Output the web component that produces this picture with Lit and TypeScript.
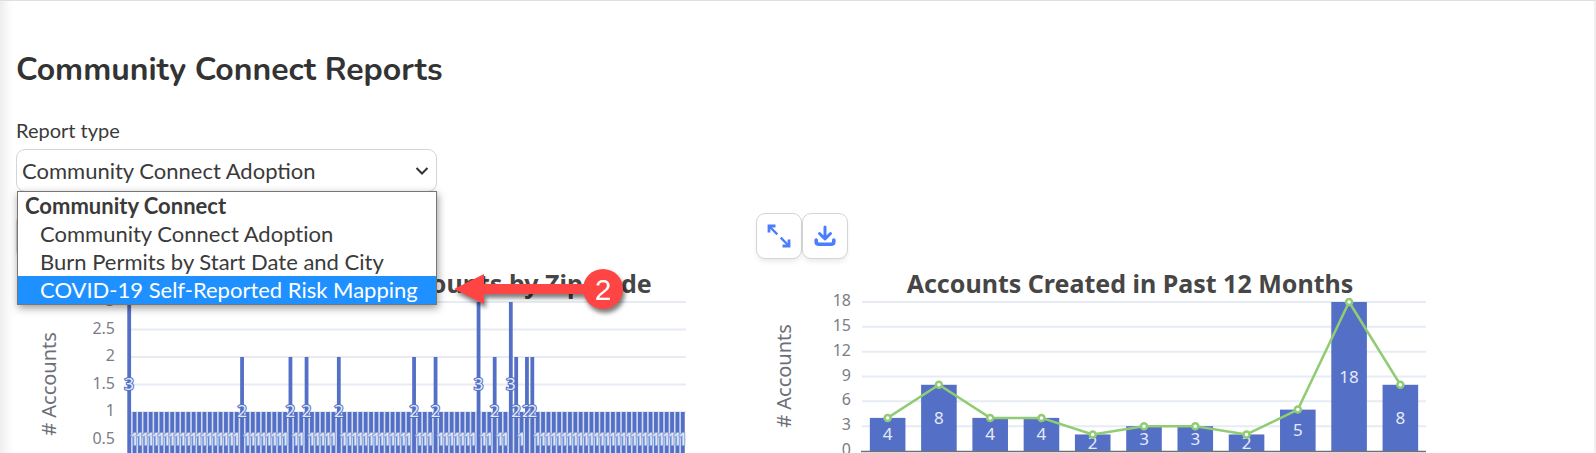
import { LitElement, html, svg, css } from "lit";
import { customElement, property } from "lit/decorators.js";

const fontStack = css`"Noto Sans", "Open Sans", sans-serif`;

@customElement("zip-chart")
class ZipChart extends LitElement {
  static styles = css`
    :host { display: block; }
    svg { display: block; width: 100%; font-family: ${fontStack}; }
    .title { font-size: 25px; font-weight: 700; fill: #464646; text-anchor: middle; }
    .tick { font-size: 16px; fill: #7b7d86; text-anchor: end; }
    .name { font-size: 20px; fill: #6e7079; text-anchor: middle; }
    .grid { stroke: #e6ebf4; stroke-width: 2; }
    .track { fill: #d3dbf3; }
    .bar { fill: #5470c6; }
    .value { font-size: 17px; fill: #e6eaf6; stroke: #5470c6; stroke-width: 2; paint-order: stroke; text-anchor: middle; }
    .one { stroke: #8fa2da; }
  `;

  private peaks: Record<number, number> = {
    0: 3, 21: 2, 30: 2, 33: 2, 39: 2, 53: 2, 57: 2, 65: 3, 68: 2, 71: 3, 72: 2, 74: 2, 75: 2,
  };

  render() {
    const counts = Array.from({ length: 104 }, (_, i) => this.peaks[i] ?? 1);
    const zero = 208;
    const unit = 55;
    const pitch = 559 / counts.length;
    const x = (i: number) => 110.5 + pitch * (i + 0.5);
    return html`<svg viewBox="0 0 740 194" role="img" aria-label="Accounts by zip code">
      ${[3, 2.5, 2, 1.5, 1, 0.5].map((v) => svg`
        <line class="grid" x1="111" x2="670" y1=${zero - v * unit} y2=${zero - v * unit}></line>
        <text class="tick" x="99" y=${zero - v * unit + 4}>${v}</text>`)}
      <text class="name" transform="translate(40 125) rotate(-90)"># Accounts</text>
      <text class="title" x="373" y="34">Community Connect Accounts by Zip Code</text>
      <rect class="track" x="115" y=${zero - unit} width="554" height="60"></rect>
      ${counts.map((v, i) => svg`<rect class="bar" x=${x(i) - 1.9} y=${zero - v * unit} width="3.8" height=${v * unit}></rect>`)}
      ${counts.map((v, i) => svg`<text class="value ${v === 1 ? "one" : ""}" x=${x(i)} y=${zero - (v * unit) / 2 + 5}>${v}</text>`)}
    </svg>`;
  }
}

@customElement("month-chart")
class MonthChart extends LitElement {
  static styles = css`
    :host { display: block; }
    svg { display: block; width: 100%; font-family: ${fontStack}; }
    .title { font-size: 25px; font-weight: 700; fill: #464646; text-anchor: middle; }
    .tick { font-size: 16px; fill: #7b7d86; text-anchor: end; }
    .name { font-size: 20px; fill: #6e7079; text-anchor: middle; }
    .grid { stroke: #e6ebf4; stroke-width: 2; }
    .axis { stroke: #6e7079; stroke-width: 1.5; }
    .bar { fill: #5470c6; }
    .value { font-size: 17px; fill: #e6eaf6; text-anchor: middle; }
    .trend { fill: none; stroke: #91cc75; stroke-width: 2.5; stroke-linejoin: bevel; }
    .dot { fill: #fff; stroke: #91cc75; stroke-width: 2.5; }
  `;

  private months = [4, 8, 4, 4, 2, 3, 3, 2, 5, 18, 8];

  render() {
    const zero = 192;
    const unit = 149 / 18;
    const pitch = 564 / this.months.length;
    const x = (i: number) => 106 + pitch * (i + 0.5);
    const y = (v: number) => zero - v * unit;
    return html`<svg viewBox="0 0 740 194" role="img" aria-label="Accounts created in past 12 months">
      ${[18, 15, 12, 9, 6, 3, 0].map((v) => svg`
        ${v ? svg`<line class="grid" x1="106" x2="670" y1=${y(v)} y2=${y(v)}></line>` : ""}
        <text class="tick" x="95" y=${y(v) + 4}>${v}</text>`)}
      <text class="name" transform="translate(35 117) rotate(-90)"># Accounts</text>
      <text class="title" x="374" y="34">Accounts Created in Past 12 Months</text>
      ${this.months.map((v, i) => svg`<rect class="bar" x=${x(i) - 17.8} y=${y(v)} width="35.6" height=${v * unit}></rect>`)}
      <line class="axis" x1="105" x2="670" y1="192.5" y2="192.5"></line>
      ${this.months.map((v, i) => svg`<text class="value" x=${x(i)} y=${y(v / 2) + 6}>${v}</text>`)}
      <polyline class="trend" points=${this.months.map((v, i) => `${x(i)},${y(v)}`).join(" ")}></polyline>
      ${this.months.map((v, i) => svg`<circle class="dot" cx=${x(i)} cy=${y(v)} r="3"></circle>`)}
    </svg>`;
  }
}

@customElement("report-card")
class ReportCard extends LitElement {
  static styles = css`
    :host { display: block; min-width: 0; }
    .tools { display: flex; }
    button {
      box-sizing: border-box; width: 46px; height: 46px; padding: 0;
      display: grid; place-items: center; background: #fff;
      border: 1px solid #d5d5d8; border-radius: 9px;
      box-shadow: 0 4px 5px -1px rgba(0, 0, 0, 0.08);
    }
    svg { display: block; }
  `;

  @property() label = "";

  render() {
    return html`
      <div class="tools">
        <button type="button" aria-label="Expand ${this.label}">
          <svg width="24" height="24" viewBox="0 0 24 24" fill="none" stroke="#4a7dff">
            <path d="M10.300 10.300L3 3M13.700 13.700L21 21" stroke-width="2.400"></path>
            <path d="M2 8.500V2H8.500M22 15.500V22H15.500" stroke-width="2.800"></path>
          </svg>
        </button>
        <button type="button" aria-label="Download ${this.label}">
          <svg width="22" height="22" viewBox="0 0 22 22" fill="none" stroke="#4a7dff" stroke-linecap="round" stroke-linejoin="round">
            <path d="M11 2V13M5.500 8.500L11 14L16.500 8.500" stroke-width="3"></path>
            <path d="M2.200 15V16.500Q2.200 19.300 5 19.300H17Q19.800 19.300 19.800 16.500V15" stroke-width="3.600"></path>
          </svg>
        </button>
      </div>
      <slot></slot>`;
  }
}

@customElement("app-root")
class AppRoot extends LitElement {
  static styles = css`
    :host {
      display: block; position: relative; box-sizing: border-box;
      height: 100vh; overflow: hidden; background: #fff; color: #3a3a3a;
      border-top: 1px solid #dfdfdf; border-right: 2px solid #f0f0f0;
      font-family: Lato, sans-serif; font-variant-ligatures: none;
    }
    .edge {
      position: absolute; left: 0; top: 0; bottom: 0; width: 14px;
      background: linear-gradient(to right, #eeeeee, #fafafa 60%, #ffffff);
    }
    .page { position: relative; padding: 45px 98px 0 16px; }
    h1 { margin: 0; font: 700 32px/48px Nunito, "Noto Sans", sans-serif; color: #333; }
    .label { display: block; margin-top: 23px; font-size: 20px; line-height: 26px; }
    .field { position: relative; width: 421px; margin-top: 6px; }
    select {
      display: block; box-sizing: border-box; width: 100%; height: 43px; padding: 0 32px 0 5px;
      appearance: none; background: #fff; color: #3a3a3a; font-variant-ligatures: none;
      border: 1px solid #d5d5d8; border-radius: 9px; font: 22px/28px Lato, sans-serif;
    }
    .chevron { position: absolute; right: 8px; top: 17px; pointer-events: none; }
    .menu {
      position: absolute; z-index: 2; left: 1px; right: 0; top: 42px;
      margin: 0; padding: 0; list-style: none; background: #fff;
      border: 1px solid #767676; box-shadow: 1px 3px 8px rgba(0, 0, 0, 0.4);
      font-size: 22px; line-height: 28px;
    }
    .menu li { padding-left: 22px; white-space: nowrap; }
    .menu .group { padding-left: 7px; font-weight: 700; }
    .menu .active { background: #1e90ff; color: #fff; }
    .cards { display: grid; grid-template-columns: 1fr 1fr; margin-top: 21px; }
    .callout {
      position: absolute; z-index: 3; left: 430px; top: 75px; overflow: visible;
      filter: drop-shadow(2px 4px 2px rgba(0, 0, 0, 0.5));
    }
    .step { font: 30px "Liberation Sans", sans-serif; fill: #fff; text-anchor: middle; }
  `;

  render() {
    return html`
      <div class="edge"></div>
      <main class="page">
        <h1>Community Connect Reports</h1>
        <label class="label" for="report">Report type</label>
        <div class="field">
          <select id="report">
            <optgroup label="Community Connect">
              <option selected>Community Connect Adoption</option>
              <option>Burn Permits by Start Date and City</option>
              <option>COVID-19 Self-Reported Risk Mapping</option>
            </optgroup>
          </select>
          <svg class="chevron" width="14" height="10" viewBox="0 0 14 10" fill="none" stroke="#333" stroke-width="2">
            <path d="M1.500 2L7 7.500L12.500 2"></path>
          </svg>
          <ul class="menu">
            <li class="group">Community Connect</li>
            <li>Community Connect Adoption</li>
            <li>Burn Permits by Start Date and City</li>
            <li class="active">COVID-19 Self-Reported Risk Mapping</li>
          </ul>
          <svg class="callout" width="180" height="130" viewBox="0 0 180 130">
            <path d="M8 65L38 50V60H150V70H38V80Z" fill="#ff4444"></path>
            <circle cx="157" cy="65" r="20" fill="#ff4444"></circle>
            <text class="step" x="157" y="76">2</text>
          </svg>
        </div>
        <div class="cards">
          <report-card label="accounts by zip code"><zip-chart></zip-chart></report-card>
          <report-card label="accounts by month"><month-chart></month-chart></report-card>
        </div>
      </main>`;
  }
}
